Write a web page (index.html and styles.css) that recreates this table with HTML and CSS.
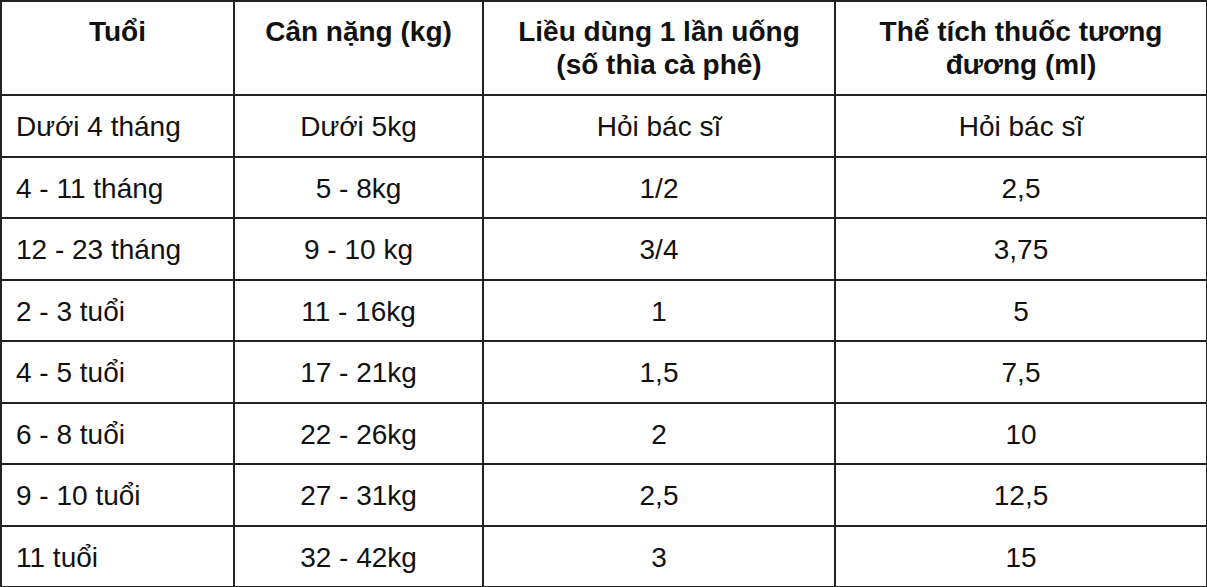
FILE: index.html
```html
<!DOCTYPE html>
<html lang="vi">
<head>
<meta charset="utf-8">
<title>Liều dùng</title>
<link rel="stylesheet" href="styles.css">
</head>
<body>
<table class="dose">
  <colgroup>
    <col class="c1"><col class="c2"><col class="c3"><col class="c4">
  </colgroup>
  <thead>
    <tr>
      <th>Tuổi</th>
      <th>Cân nặng (kg)</th>
      <th>Liều dùng 1 lần uống<br>(số thìa cà phê)</th>
      <th>Thể tích thuốc tương<br>đương (ml)</th>
    </tr>
  </thead>
  <tbody>
    <tr><td>Dưới 4 tháng</td><td>Dưới 5kg</td><td>Hỏi bác sĩ</td><td>Hỏi bác sĩ</td></tr>
    <tr><td>4 - 11 tháng</td><td>5 - 8kg</td><td>1/2</td><td>2,5</td></tr>
    <tr><td>12 - 23 tháng</td><td>9 - 10 kg</td><td>3/4</td><td>3,75</td></tr>
    <tr><td>2 - 3 tuổi</td><td>11 - 16kg</td><td>1</td><td>5</td></tr>
    <tr><td>4 - 5 tuổi</td><td>17 - 21kg</td><td>1,5</td><td>7,5</td></tr>
    <tr><td>6 - 8 tuổi</td><td>22 - 26kg</td><td>2</td><td>10</td></tr>
    <tr><td>9 - 10 tuổi</td><td>27 - 31kg</td><td>2,5</td><td>12,5</td></tr>
    <tr><td>11 tuổi</td><td>32 - 42kg</td><td>3</td><td>15</td></tr>
  </tbody>
</table>
</body>
</html>
```
FILE: styles.css
```css
html, body {
  margin: 0;
  padding: 0;
  background: #fff;
}
body {
  font-family: "Liberation Sans", Arial, sans-serif;
  color: #111;
}
.dose {
  width: 1206px;
  border-collapse: collapse;
  table-layout: fixed;
}
.c1 { width: 233px; }
.c2 { width: 249px; }
.c3 { width: 352px; }
.c4 { width: 372px; }
.dose th,
.dose td {
  border: 2px solid #222;
  font-size: 28px;
  padding: 0 14px;
}
.dose th {
  height: 94px;
  box-sizing: border-box;
  vertical-align: top;
  padding-top: 13px;
  font-weight: bold;
  line-height: 33px;
  text-align: center;
}
.dose td {
  height: 61.5px;
  box-sizing: border-box;
  vertical-align: middle;
  text-align: center;
  line-height: 30px;
  padding-top: 3px;
}
.dose td:first-child {
  text-align: left;
}
```
